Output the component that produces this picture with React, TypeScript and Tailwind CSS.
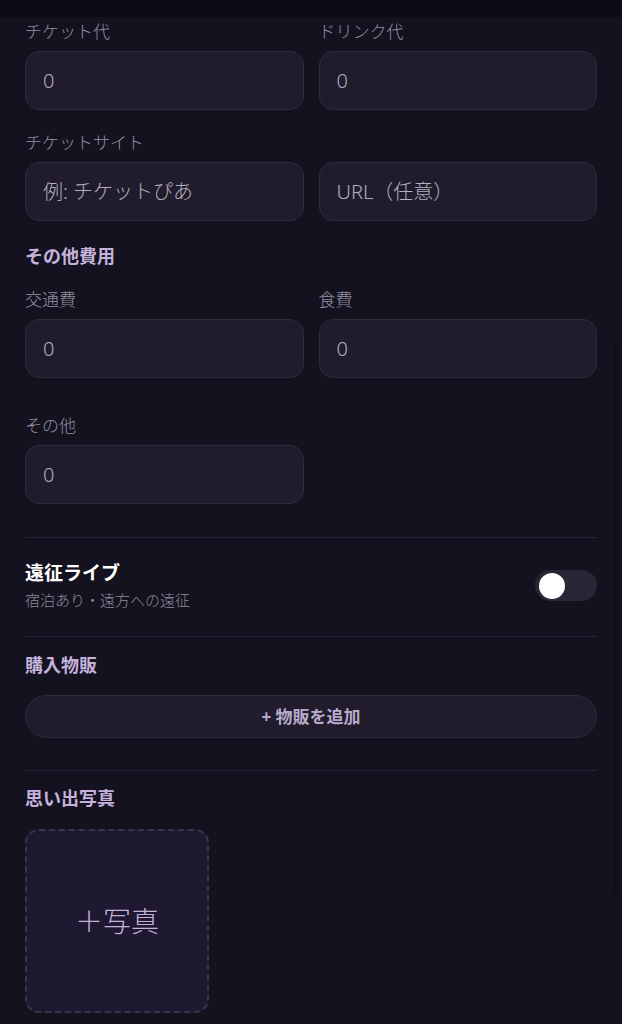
import React from 'react';

const inputCls =
  "h-[59px] w-full rounded-[14px] border border-[#2f2b3b] bg-[#201c2b] px-[17px] text-[20px] font-light text-[#b3afbd] placeholder:text-[#b3afbd] outline-none";

const Label = ({ children }: { children: React.ReactNode }) => (
  <div className="mb-[9px] text-[17px] font-light leading-[20px] text-[#948fa1]">{children}</div>
);

const Field = ({ label, placeholder }: { label: string; placeholder: string }) => (
  <div>
    <Label>{label}</Label>
    <input className={inputCls} placeholder={placeholder} />
  </div>
);

const Heading = ({ children }: { children: React.ReactNode }) => (
  <h2 className="text-[18px] font-bold leading-[22px] text-[#c4b2dc]">{children}</h2>
);

const Divider = () => <div className="h-px bg-[#272334]" />;

export default function App() {
  return (
    <div className="relative min-h-screen overflow-hidden bg-[#15121f] font-['Noto_Sans','Noto_Sans_CJK_JP',sans-serif]">
      <div className="h-[17px] bg-[#0d0c16]" />

      <div className="px-[25px] pt-[5px] pb-[20px]">
        <div className="grid grid-cols-2 gap-x-[15px]">
          <Field label="チケット代" placeholder="0" />
          <Field label="ドリンク代" placeholder="0" />
        </div>

        <div className="mt-[23px]">
          <Label>チケットサイト</Label>
          <div className="grid grid-cols-2 gap-x-[15px]">
            <input className={inputCls} placeholder="例: チケットぴあ" />
            <input className={inputCls} placeholder="URL（任意）" />
          </div>
        </div>

        <div className="mt-[24px]">
          <Heading>その他費用</Heading>
        </div>

        <div className="mt-[23px] grid grid-cols-2 gap-x-[15px]">
          <Field label="交通費" placeholder="0" />
          <Field label="食費" placeholder="0" />
        </div>

        <div className="mt-[38px] grid grid-cols-2 gap-x-[15px]">
          <Field label="その他" placeholder="0" />
        </div>

        <div className="mt-[33px]">
          <Divider />
        </div>

        <div className="mt-[23px] flex items-center justify-between">
          <div>
            <div className="text-[19px] font-bold leading-[24px] text-white">遠征ライブ</div>
            <div className="mt-[5px] text-[15px] font-light leading-[20px] text-[#8e8a9b]">宿泊あり・遠方への遠征</div>
          </div>
          <button className="flex h-[31px] w-[62px] items-center rounded-full bg-[#2a2635] px-[4px]">
            <span className="h-[26px] w-[26px] rounded-full bg-white" />
          </button>
        </div>

        <div className="mt-[26px]">
          <Divider />
        </div>

        <div className="mt-[17px]">
          <Heading>購入物販</Heading>
        </div>

        <button className="mt-[19px] flex h-[43px] w-full items-center justify-center rounded-full border border-[#2f2b3b] bg-[#201c2b] text-[17px] font-bold text-[#b8aacd]">
          +&nbsp;物販を追加
        </button>

        <div className="mt-[32px]">
          <Divider />
        </div>

        <div className="mt-[16px]">
          <Heading>思い出写真</Heading>
        </div>

        <button className="mt-[20px] flex h-[184px] w-[184px] items-center justify-center rounded-[14px] border-2 border-dashed border-[#3a3449] bg-[#1e1830] text-[28px] font-light text-[#c2b2da]">
          ＋写真
        </button>
      </div>

      <div className="absolute right-[5px] top-[345px] h-[548px] w-[3px] rounded-full bg-[#0f0d18]" />
    </div>
  );
}
